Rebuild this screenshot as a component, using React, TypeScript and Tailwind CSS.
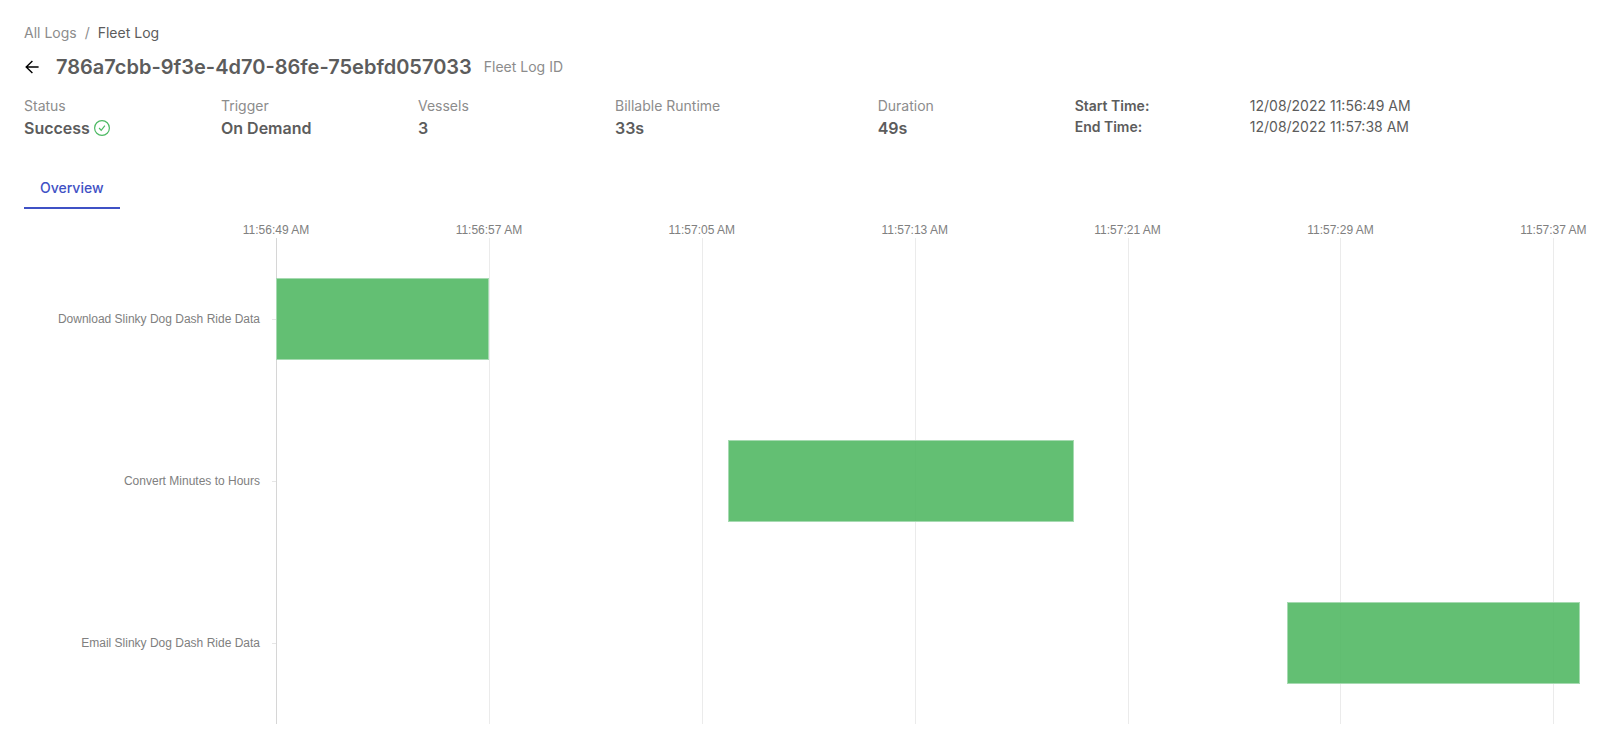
const START = 0;
const END = 49;
const ticks = [
  { at: 0, label: "11:56:49 AM" },
  { at: 8, label: "11:56:57 AM" },
  { at: 16, label: "11:57:05 AM" },
  { at: 24, label: "11:57:13 AM" },
  { at: 32, label: "11:57:21 AM" },
  { at: 40, label: "11:57:29 AM" },
  { at: 48, label: "11:57:37 AM" },
];
const vessels = [
  { name: "Download Slinky Dog Dash Ride Data", from: 0, to: 8 },
  { name: "Convert Minutes to Hours", from: 17, to: 30 },
  { name: "Email Slinky Dog Dash Ride Data", from: 38, to: 49 },
];
const pct = (s: number) => `${((s - START) / (END - START)) * 100}%`;

function ArrowLeft() {
  return (
    <svg viewBox="0 0 16 16" className="size-4" fill="none" stroke="currentColor" strokeWidth="1.4" aria-hidden="true">
      <path d="M14.6 8H2.2M8.4 1.9 2.2 8l6.2 6.1" />
    </svg>
  );
}

function CheckCircle() {
  return (
    <svg viewBox="0 0 16 16" className="size-4" fill="none" stroke="#4cb963" aria-hidden="true">
      <circle cx="8" cy="8" r="7.4" strokeWidth="1.2" />
      <path d="M5.1 8 7.2 10.3 10.9 5.6" strokeWidth="1.2" />
    </svg>
  );
}

function Stat({ label, value, span, ok }: { label: string; value: string; span: string; ok?: boolean }) {
  return (
    <div className={span}>
      <dt className="text-sm leading-[22px] text-[#8c8c8c]">{label}</dt>
      <dd className="flex items-center gap-1 text-base leading-[22px] font-semibold">
        {value}
        {ok && <CheckCircle />}
      </dd>
    </div>
  );
}

function Timeline() {
  return (
    <section aria-label="Vessel timeline" className="flex pt-[13px] pr-5 font-['Liberation_Sans',Arial,sans-serif] text-xs text-[#808080]">
      <ul className="w-[252px] shrink-0 pt-4">
        {vessels.map((v) => (
          <li key={v.name} className="flex h-[162px] items-center justify-end gap-3">
            {v.name}
            <span className="h-px w-1 bg-[#e6e6e6]" />
          </li>
        ))}
      </ul>
      <div className="min-w-0 grow">
        <div className="relative h-4">
          {ticks.map((t) => (
            <span key={t.at} className="absolute top-0 -translate-x-1/2 whitespace-nowrap" style={{ left: pct(t.at) }}>
              {t.label}
            </span>
          ))}
        </div>
        <div className="relative">
          {ticks.map((t) => (
            <span
              key={t.at}
              className="absolute inset-y-0 w-px bg-[#ebebeb] first:bg-[#d6d6d6]"
              style={{ left: pct(t.at) }}
            />
          ))}
          {vessels.map((v) => (
            <div key={v.name} className="relative flex h-[162px] items-center">
              <div
                className="h-[82px] border border-[#a6dab1] bg-[#4db660]/88 bg-clip-padding"
                style={{ marginLeft: pct(v.from), width: pct(v.to - v.from) }}
              />
            </div>
          ))}
        </div>
      </div>
    </section>
  );
}

export default function App() {
  return (
    <main className="min-h-screen bg-white pt-[22px] pr-5 pb-[7px] pl-6 font-['Inter',sans-serif] text-sm leading-[22px] text-[#5c5c5c]">
      <nav aria-label="Breadcrumb" className="flex gap-2">
        <a href="#logs" className="text-[#8c8c8c]">All Logs</a>
        <span className="text-[#8c8c8c]">/</span>
        <span>Fleet Log</span>
      </nav>
      <header className="mt-[7px] flex items-center">
        <button type="button" aria-label="Back" className="mr-4 text-black">
          <ArrowLeft />
        </button>
        <h1 className="mr-3 text-xl leading-8 font-semibold">786a7cbb-9f3e-4d70-86fe-75ebfd057033</h1>
        <span className="text-[#8c8c8c]">Fleet Log ID</span>
      </header>
      <div className="mt-3 grid grid-cols-24">
        <dl className="col-span-16 grid grid-cols-16">
          <Stat label="Status" value="Success" span="col-span-3" ok />
          <Stat label="Trigger" value="On Demand" span="col-span-3" />
          <Stat label="Vessels" value="3" span="col-span-3" />
          <Stat label="Billable Runtime" value="33s" span="col-span-4" />
          <Stat label="Duration" value="49s" span="col-span-3" />
        </dl>
        <dl className="col-span-8 grid grid-cols-[1fr_2fr] content-start leading-[21px]">
          <dt className="font-semibold">Start Time:</dt>
          <dd>12/08/2022 11:56:49 AM</dd>
          <dt className="font-semibold">End Time:</dt>
          <dd>12/08/2022 11:57:38 AM</dd>
        </dl>
      </div>
      <div role="tablist" className="mt-[30px] flex">
        <button type="button" role="tab" aria-selected="true" className="border-b-2 border-[#3f51c5] px-4 py-2 font-medium text-[#3f51c5]">
          Overview
        </button>
      </div>
      <Timeline />
    </main>
  );
}
